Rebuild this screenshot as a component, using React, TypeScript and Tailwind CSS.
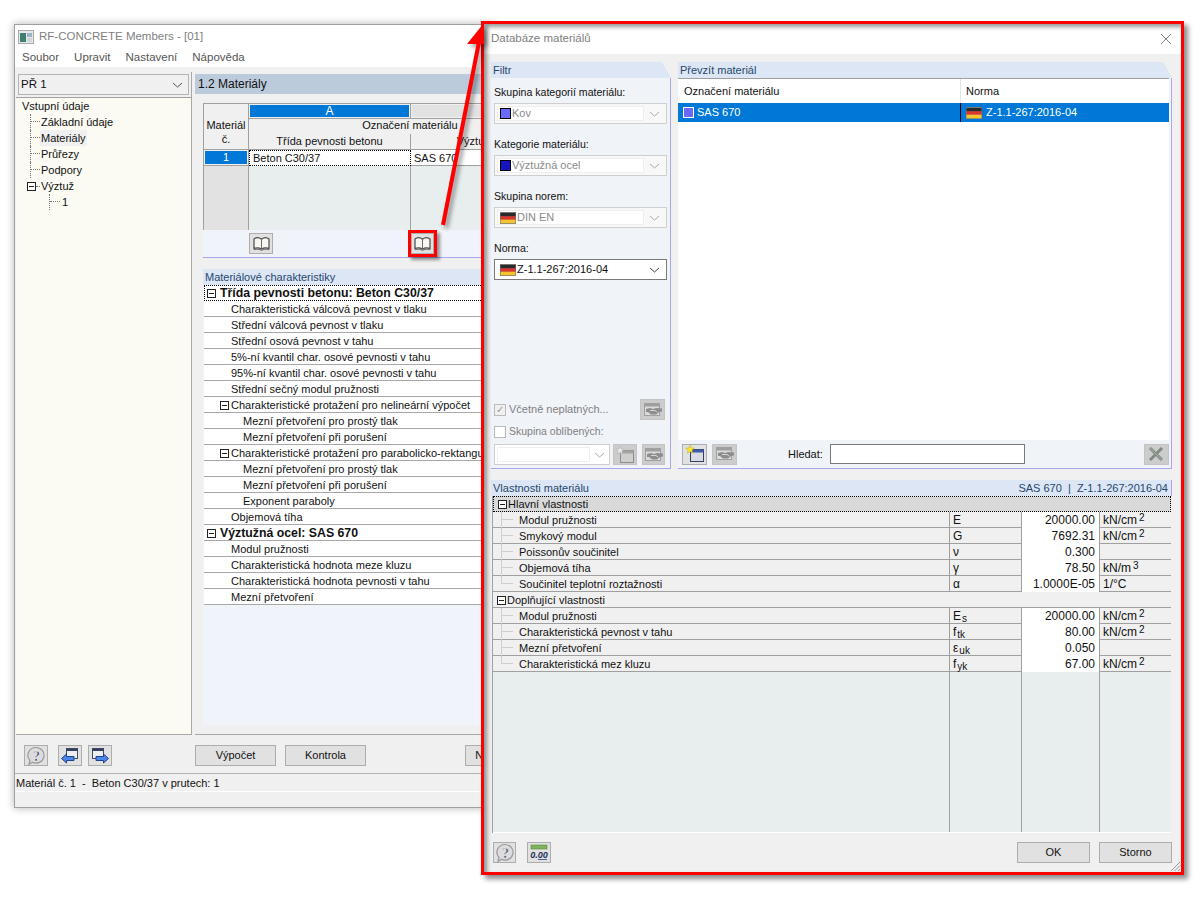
import type { ReactNode } from "react";

function Flag() {
  return (
    <svg width="16" height="12" viewBox="0 0 16 12" className="shrink-0">
      <rect width="16" height="12" fill="#777" />
      <rect x="0.5" y="1" width="15" height="3.4" fill="#2a2a2a" />
      <rect x="0.5" y="4.4" width="15" height="3.3" fill="#e0332c" />
      <rect x="0.5" y="7.7" width="15" height="3.6" fill="#f4c531" />
    </svg>
  );
}

function Chevron({ color = "#555" }: { color?: string }) {
  return (
    <svg width="11" height="6" viewBox="0 0 11 6" className="shrink-0">
      <path d="M1 1l4.5 4L10 1" fill="none" stroke={color} strokeWidth="1" />
    </svg>
  );
}

function BookIcon() {
  return (
    <svg width="17" height="15" viewBox="0 0 17 15">
      <path d="M1 3C3.500 1 6 1.200 8.500 3.200 11 1.200 13.500 1 16 3v9.500c-2.500-1-5-1-7.500.5C6 11.500 3.500 11.500 1 12.500z" fill="#f7f6f0" stroke="#4a4a4a" strokeWidth="1.200" />
      <path d="M8.500 3.200V13" stroke="#6d6d6d" strokeWidth="1" />
      <path d="M1 13.700c2.500-1 5-.8 7.500.6 2.500-1.400 5-1.600 7.500-.6" stroke="#777" strokeWidth="1.100" fill="none" />
    </svg>
  );
}

function HelpIcon() {
  return (
    <svg width="20" height="20" viewBox="0 0 20 20">
      <path d="M10 1.500a8 7.800 0 1 1-3.500 14.800L3 18.500l1-4A8 7.800 0 0 1 10 1.500z" fill="#dcdcdf" stroke="#9a9a9a" strokeWidth="1.200" />
      <text x="10.500" y="14.500" textAnchor="middle" fontSize="14" fontWeight="700" fontFamily="'Liberation Serif', serif" fill="#3a4560" stroke="#f4f4f4" strokeWidth=".4">?</text>
    </svg>
  );
}

function NavIcon({ dir }: { dir: "left" | "right" }) {
  return (
    <svg width="20" height="18" viewBox="0 0 20 18">
      <rect x={dir === "left" ? 6.5 : 2.5} y="1.500" width="11" height="10" fill="#eeeef2" stroke="#444c60" strokeWidth="1" />
      <rect x={dir === "left" ? 6.5 : 2.5} y="1.500" width="11" height="2.500" fill="#34405f" />
      {dir === "left" ? (
        <path d="M1.500 11.500l5-4.500v2.500h7.500v4H6.500V16z" fill="#4d86ea" stroke="#1f3f92" strokeWidth="1" />
      ) : (
        <path d="M18.500 11.500l-5-4.500v2.500H6v4h7.500V16z" fill="#4d86ea" stroke="#1f3f92" strokeWidth="1" />
      )}
    </svg>
  );
}

function ShakeIcon() {
  return (
    <svg width="20" height="16" viewBox="0 0 20 16">
      <rect x="1.500" y="1.500" width="15" height="12" fill="#dadada" stroke="#a0a0a0" />
      <rect x="2" y="2" width="14" height="2.500" fill="#9f9f9f" />
      <path d="M3 7l4-1 3 1 3-1 6 .5v3l-3 .5-3 2.500H8L5 10H3z" fill="#8d8d8d" />
      <path d="M7 8.500h5l2 1.500" stroke="#d5d5d5" fill="none" />
    </svg>
  );
}

function NewIcon({ active }: { active: boolean }) {
  const line = active ? "#334060" : "#8d8d8d";
  return (
    <svg width="20" height="18" viewBox="0 0 20 18">
      <rect x="5.500" y="4.500" width="13" height="12" fill={active ? "#d9dbe3" : "#cfcfcf"} stroke={line} />
      <rect x="5.500" y="4.500" width="13" height="3" fill={active ? "#3f5aa6" : "#a5a5a5"} />
      <path d="M5 0l1.200 3 3.100.2-2.400 2 .8 3L5 6.500 2.300 8.200l.8-3-2.400-2 3.100-.2z" fill={active ? "#f8ea2e" : "#e7e7e7"} stroke={active ? "#c4a810" : "#aaa"} strokeWidth=".5" />
    </svg>
  );
}

function CrossIcon() {
  return (
    <svg width="18" height="16" viewBox="0 0 18 16">
      <path d="M3 2l12 12M15 2L3 14" stroke="#7f8a82" strokeWidth="3" />
      <path d="M3 2l12 12" stroke="#a7afa9" strokeWidth="1" />
    </svg>
  );
}

function CalcIcon() {
  return (
    <svg width="20" height="20" viewBox="0 0 20 20">
      <rect x="2" y="2" width="16" height="4" fill="#7fb25c" stroke="#5a8a3e" strokeWidth=".6" />
      <text x="10" y="14.500" textAnchor="middle" fontSize="9" fontStyle="italic" fontWeight="700" fontFamily="'Liberation Sans', sans-serif" fill="#23325e">0.00</text>
      <path d="M9 16.500h9" stroke="#4a5f92" strokeWidth="1" />
    </svg>
  );
}

function IconBtn({ children, dim, cls }: { children: ReactNode; dim?: boolean; cls: string }) {
  return (
    <div className={`${cls} flex shrink-0 items-center justify-center border ${dim ? "border-[#c4c4c4] bg-[#cccccc]" : "border-[#adadad] bg-[#e1e1e1]"}`}>
      {children}
    </div>
  );
}

function Btn({ label, cls }: { label: string; cls: string }) {
  return (
    <div className={`${cls} flex h-[21px] shrink-0 items-center justify-center border border-[#adadad] bg-[#e1e1e1] text-[11px] text-[#111]`}>
      {label}
    </div>
  );
}

function Expander() {
  return (
    <span className="relative inline-block h-[9px] w-[9px] shrink-0 border border-[#222] bg-white">
      <span className="absolute left-[1px] top-[3px] h-[1px] w-[5px] bg-[#222]" />
    </span>
  );
}

function Combo({ label, swatch, flag, text, enabled }: { label: string; swatch?: string; flag?: boolean; text: string; enabled?: boolean }) {
  return (
    <>
      <div className="h-[18px] text-[10.6px] leading-[14px] text-[#111]">{label}</div>
      <div className={`mb-[13px] flex h-[21px] w-[173px] items-center border pl-[2px] pr-[6px] ${enabled ? "border-[#7a7a7a] bg-white text-[#111]" : "border-[#cfcfcf] bg-[#f8f8f8] text-[#8a8a8a]"}`}>
        <div className={`mr-[5px] flex h-[15px] flex-1 items-center gap-[1px] border pl-[2px] ${enabled ? "border-white" : "border-[#eeeeee] bg-white"}`}>
          {swatch && <span className={`h-[11px] w-[11px] shrink-0 border border-black ${swatch}`} />}
          {flag && <Flag />}
          <span className="truncate text-[11px]">{text}</span>
        </div>
        <Chevron color={enabled ? "#444" : "#aaa"} />
      </div>
    </>
  );
}

function PanelHead({ children }: { children: ReactNode }) {
  return (
    <div className="flex h-[16px] items-center bg-[#dce6f4] pl-[2px] text-[11px] text-[#27466e] [clip-path:polygon(0_0,calc(100%-9px)_0,100%_100%,0_100%)]">
      {children}
    </div>
  );
}

const navTree = [
  { t: "Základní údaje", selected: false },
  { t: "Materiály", selected: true },
  { t: "Průřezy", selected: false },
  { t: "Podpory", selected: false },
];

function NavTree() {
  return (
    <div className="flex-1 border-t border-[#a0a0a0] bg-[#fbfbf3] pl-[6px] text-[11px] leading-[16px] text-[#111]">
      <div className="h-[16px]">Vstupní údaje</div>
      {navTree.map((r) => (
        <div key={r.t} className="ml-[8px] flex h-[16px] items-stretch">
          <span className="w-[10px] shrink-0 border-l border-dotted border-[#777]">
            <span className="block h-[8px] border-b border-dotted border-[#777]" />
          </span>
          <span className={`px-[1px] ${r.selected ? "bg-[#f0f0f0]" : ""}`}>{r.t}</span>
        </div>
      ))}
      <div className="ml-[5px] flex h-[16px] items-center">
        <Expander />
        <span className="w-[4px] border-b border-dotted border-[#777]" />
        <span className="pl-[1px]">Výztuž</span>
      </div>
      <div className="ml-[27px] flex h-[16px] items-stretch">
        <span className="w-[11px] shrink-0 border-l border-dotted border-[#777]">
          <span className="block h-[8px] border-b border-dotted border-[#777]" />
        </span>
        <span className="pl-[2px]">1</span>
      </div>
    </div>
  );
}

const charRows: { t: string; kind: "group" | "sub" | "l1" | "l2" }[] = [
  { t: "Třída pevnosti betonu: Beton C30/37", kind: "group" },
  { t: "Charakteristická válcová pevnost v tlaku", kind: "l1" },
  { t: "Střední válcová pevnost v tlaku", kind: "l1" },
  { t: "Střední osová pevnost v tahu", kind: "l1" },
  { t: "5%-ní kvantil char. osové pevnosti v tahu", kind: "l1" },
  { t: "95%-ní kvantil char. osové pevnosti v tahu", kind: "l1" },
  { t: "Střední sečný modul pružnosti", kind: "l1" },
  { t: "Charakteristické protažení pro nelineární výpočet", kind: "sub" },
  { t: "Mezní přetvoření pro prostý tlak", kind: "l2" },
  { t: "Mezní přetvoření při porušení", kind: "l2" },
  { t: "Charakteristické protažení pro parabolicko-rektangulární", kind: "sub" },
  { t: "Mezní přetvoření pro prostý tlak", kind: "l2" },
  { t: "Mezní přetvoření při porušení", kind: "l2" },
  { t: "Exponent paraboly", kind: "l2" },
  { t: "Objemová tíha", kind: "l1" },
  { t: "Výztužná ocel: SAS 670", kind: "group" },
  { t: "Modul pružnosti", kind: "l1" },
  { t: "Charakteristická hodnota meze kluzu", kind: "l1" },
  { t: "Charakteristická hodnota pevnosti v tahu", kind: "l1" },
  { t: "Mezní přetvoření", kind: "l1" },
];

function CharRow({ t, kind, first }: { t: string; kind: string; first: boolean }) {
  return (
    <div className={`flex h-[16px] items-center whitespace-nowrap bg-white text-[11px] text-[#111] ${first ? "border border-dotted border-black" : "border-b border-[#a8a8a8] pt-[1px]"}`}>
      {kind === "group" && (
        <div className={`flex items-center font-bold ${first ? "pl-[2px]" : "pl-[3px]"}`}>
          <Expander />
          <span className="pl-[4px] text-[12.300px]">{t}</span>
        </div>
      )}
      {kind === "sub" && (
        <div className="flex items-center pl-[16px]">
          <Expander />
          <span className="pl-[2px]">{t}</span>
        </div>
      )}
      {kind === "l1" && <span className="pl-[27px]">{t}</span>}
      {kind === "l2" && <span className="pl-[39px]">{t}</span>}
    </div>
  );
}

function MainWindow() {
  return (
    <div className="absolute left-[14px] top-[24px] flex h-[784px] w-[480px] flex-col overflow-hidden border border-[#a0a0a0] bg-[#f0f0f0] shadow-[0_0_8px_rgba(0,0,0,0.3)]">
      <div className="flex h-[24px] items-center gap-[5px] bg-white pl-[3px] text-[11.500px] text-[#808080]">
        <svg width="16" height="14" viewBox="0 0 16 14">
          <rect x=".5" y=".5" width="15" height="13" fill="#e8e8e8" stroke="#aaa" />
          <rect x="2" y="3" width="6" height="9" fill="#3f7f6f" />
          <rect x="9" y="3" width="5" height="4" fill="#9db2c9" />
          <rect x="9" y="8" width="5" height="4" fill="#cfd6dc" />
        </svg>
        <span>RF-CONCRETE Members - [01]</span>
      </div>
      <div className="flex h-[18px] items-center gap-[15px] bg-white pl-[7px] text-[11.500px] text-[#555]">
        <span>Soubor</span>
        <span>Upravit</span>
        <span>Nastavení</span>
        <span>Nápověda</span>
      </div>

      <div className="mt-[5px] flex h-[663px]">
        <div className="ml-[1px] flex w-[176px] shrink-0 flex-col border-b border-r border-[#a8a8a8] pt-[2px]">
          <div className="mx-[2px] mb-[2px] flex h-[21px] items-center border border-[#b4b4b4] bg-[#f0f0f0] pl-[2px] pr-[5px] text-[11.500px] text-[#111]">
            <span className="flex-1">PŘ 1</span>
            <Chevron />
          </div>
          <NavTree />
        </div>

        <div className="ml-[3px] flex min-w-0 flex-1 flex-col border-b border-[#a8a8a8] pt-[2px]">
          <div className="flex h-[20px] items-center bg-[#bccbdb] pl-[3px] text-[12px] text-[#111]">1.2 Materiály</div>
          <div className="flex-1 pl-[8px] pt-[9px]">
            <div className="w-[500px] border-l border-t border-[#a0a0a0] bg-[#f0f0f0]">
              <div className="grid h-[126px] grid-cols-[45px_162px_160px] grid-rows-[15px_15px_16px_16px_1fr] text-[11px] text-[#111]">
                <div className="row-span-3 flex flex-col items-center justify-center border-b border-r border-[#a0a0a0] pt-[10px] leading-[14px]">
                  <span>Materiál</span>
                  <span>č.</span>
                </div>
                <div className="border-b border-r border-[#a0a0a0] p-[1px]">
                  <div className="flex h-[12px] items-center justify-center bg-[#0078d7] text-[12px] text-white">A</div>
                </div>
                <div className="border-b border-[#a0a0a0] p-[1px]">
                  <div className="h-[12px] bg-[#e2e2e2]" />
                </div>
                <div className="col-span-2 flex items-center justify-center pb-[3px]">Označení materiálu</div>
                <div className="flex items-center justify-center border-b border-r border-[#a0a0a0]">Třída pevnosti betonu</div>
                <div className="flex items-center justify-center border-b border-[#a0a0a0]">Výztužná ocel</div>
                <div className="flex items-center justify-center border-b border-r border-[#a0a0a0] p-[1px]">
                  <div className="flex h-[13px] w-full items-center justify-center bg-[#0078d7] text-white">1</div>
                </div>
                <div className="flex items-center border border-dotted border-black bg-white pl-[3px] pt-[1px]">Beton C30/37</div>
                <div className="flex items-center border-b border-[#a0a0a0] bg-white pl-[3px] pt-[1px]">SAS 670</div>
                <div className="border-r border-[#a0a0a0] bg-[#e2e2e2]" />
                <div className="border-r border-[#a0a0a0] bg-[#e8eeee]" />
                <div className="bg-[#e8eeee]" />
              </div>
            </div>
            <div className="flex h-[28px] w-[500px] items-center border-b border-[#a8a8e8] bg-[#f0f3fa] pl-[46px]">
              <IconBtn cls="h-[21px] w-[24px]"><BookIcon /></IconBtn>
              <div className="relative ml-[138px]">
                <IconBtn cls="h-[21px] w-[23px]"><BookIcon /></IconBtn>
                <div className="absolute -left-[3px] -top-[3px] h-[27px] w-[29px] border-[3px] border-[#ff0000] shadow-[3px_3px_3px_rgba(0,0,0,0.4)]" />
              </div>
            </div>

            <div className="mt-[11px] h-[456px] bg-[#f0f3fa]">
              <div className="flex h-[16px] items-center bg-[#dce6f4] pl-[2px] text-[11px] text-[#27466e]">Materiálové charakteristiky</div>
              <div className="ml-[1px]">
                {charRows.map((r, i) => (
                  <CharRow key={i} t={r.t} kind={r.kind} first={i === 0} />
                ))}
              </div>
            </div>
          </div>
        </div>
      </div>

      <div className="flex h-[39px] items-center border-b border-[#b4b4b4] pl-[9px] pt-[3px]">
        <IconBtn cls="h-[21px] w-[24px]"><HelpIcon /></IconBtn>
        <IconBtn cls="ml-[10px] h-[21px] w-[24px]"><NavIcon dir="left" /></IconBtn>
        <IconBtn cls="ml-[6px] h-[21px] w-[24px]"><NavIcon dir="right" /></IconBtn>
        <Btn label="Výpočet" cls="ml-[83px] w-[81px]" />
        <Btn label="Kontrola" cls="ml-[9px] w-[81px]" />
        <Btn label="Nastavení" cls="ml-[99px] w-[70px]" />
      </div>
      <div className="flex h-[18px] items-center whitespace-pre border-b border-white pl-[1px] pt-[2px] text-[11px] text-[#111]">Materiál č. 1  -  Beton C30/37 v prutech: 1</div>
    </div>
  );
}

function Sup({ n }: { n: string }) {
  return <sup className="-top-[3px] ml-[2px] text-[10px]">{n}</sup>;
}

function Sub({ t }: { t: string }) {
  return <sub className="-bottom-[2px] ml-[1px] text-[10px]">{t}</sub>;
}

const propRows: { name: string; sym?: ReactNode; val?: string; unit?: ReactNode; group?: boolean; focus?: boolean; last?: boolean }[] = [
  { name: "Hlavní vlastnosti", group: true, focus: true },
  { name: "Modul pružnosti", sym: "E", val: "20000.00", unit: <>kN/cm<Sup n="2" /></> },
  { name: "Smykový modul", sym: "G", val: "7692.31", unit: <>kN/cm<Sup n="2" /></> },
  { name: "Poissonův součinitel", sym: "ν", val: "0.300" },
  { name: "Objemová tíha", sym: "γ", val: "78.50", unit: <>kN/m<Sup n="3" /></> },
  { name: "Součinitel teplotní roztažnosti", sym: "α", val: "1.0000E-05", unit: "1/°C", last: true },
  { name: "Doplňující vlastnosti", group: true },
  { name: "Modul pružnosti", sym: <>E<Sub t="s" /></>, val: "20000.00", unit: <>kN/cm<Sup n="2" /></> },
  { name: "Charakteristická pevnost v tahu", sym: <>f<Sub t="tk" /></>, val: "80.00", unit: <>kN/cm<Sup n="2" /></> },
  { name: "Mezní přetvoření", sym: <>ε<Sub t="uk" /></>, val: "0.050" },
  { name: "Charakteristická mez kluzu", sym: <>f<Sub t="yk" /></>, val: "67.00", unit: <>kN/cm<Sup n="2" /></>, last: true },
];

function PropRow({ r }: { r: (typeof propRows)[number] }) {
  if (r.group) {
    return (
      <div className={`flex h-[16px] items-center gap-[1px] pl-[4px] text-[11px] text-[#111] ${r.focus ? "border border-dotted border-black bg-[#d9d9d9]" : "border-b border-[#a0a0a0] pt-[1px]"}`}>
        <Expander />
        <span>{r.name}</span>
      </div>
    );
  }
  return (
    <div className="grid h-[16px] grid-cols-[457px_72px_78px_1fr] border-b border-[#a0a0a0] text-[12px] leading-[16px] text-[#111]">
      <div className="flex items-stretch border-r border-[#a0a0a0] pl-[8px]">
        <span className={`w-[12px] shrink-0 border-l border-[#cfcfcf] ${r.last ? "h-[8px]" : ""}`}>
          <span className="block h-[8px] border-b border-[#cfcfcf]" />
        </span>
        <span className="pl-[6px] text-[11px]">{r.name}</span>
      </div>
      <div className="border-r border-[#a0a0a0] pl-[3px]">{r.sym}</div>
      <div className="border-r border-[#a0a0a0] bg-white pr-[4px] text-right">{r.val}</div>
      <div className="pl-[3px]">{r.unit}</div>
    </div>
  );
}

function Dialog() {
  return (
    <div className="absolute left-[481px] top-[21px] h-[854px] w-[703px] bg-[#f0f0f0]">
      <div className="flex h-full flex-col p-[3px]">
        <div className="flex h-[30px] items-center justify-between bg-white pl-[7px] pr-[9px] text-[11.500px] text-[#808080]">
          <span>Databáze materiálů</span>
          <svg width="12" height="12" viewBox="0 0 12 12">
            <path d="M1 1l10 10M11 1L1 11" stroke="#808080" strokeWidth="1" />
          </svg>
        </div>

        <div className="mt-[8px] flex h-[407px] gap-[7px] pl-[7px]">
          <div className="flex w-[180px] flex-col">
            <PanelHead>Filtr</PanelHead>
            <div className="flex flex-1 flex-col border-b border-r border-[#a8a8e8] bg-[#f0f3f8] pl-[3px] pt-[7px]">
              <Combo label="Skupina kategorií materiálu:" swatch="bg-[#6a6aff]" text="Kov" />
              <Combo label="Kategorie materiálu:" swatch="bg-[#1414c0]" text="Výztužná ocel" />
              <Combo label="Skupina norem:" flag text="DIN EN" />
              <Combo label="Norma:" flag text="Z-1.1-267:2016-04" enabled />
              <div className="flex-1" />
              <div className="flex h-[21px] items-center text-[11px] text-[#808080]">
                <span className="flex h-[12px] w-[12px] items-center justify-center border border-[#bbb] bg-[#f0f0f0] text-[10px] leading-none text-[#999]">✓</span>
                <span className="ml-[3px] w-[131px]">Včetně neplatných...</span>
                <IconBtn dim cls="h-[21px] w-[25px]"><ShakeIcon /></IconBtn>
              </div>
              <div className="mt-[1px] flex h-[21px] items-center text-[10.500px] text-[#808080]">
                <span className="h-[12px] w-[12px] border border-[#bbb] bg-white" />
                <span className="ml-[3px]">Skupina oblíbených:</span>
              </div>
              <div className="mb-[3px] mt-[2px] flex h-[21px] items-center">
                <div className="flex h-[21px] w-[116px] items-center border border-[#cfcfcf] bg-white pl-[2px] pr-[4px]">
                  <span className="mr-[4px] h-[15px] flex-1 border border-[#eee]" />
                  <Chevron color="#aaa" />
                </div>
                <IconBtn dim cls="ml-[3px] h-[21px] w-[24px]"><NewIcon active={false} /></IconBtn>
                <IconBtn dim cls="ml-[5px] h-[21px] w-[23px]"><ShakeIcon /></IconBtn>
              </div>
            </div>
          </div>

          <div className="flex w-[494px] flex-col">
            <PanelHead>Převzít materiál</PanelHead>
            <div className="flex flex-1 flex-col border-b border-r border-[#a8a8e8] bg-[#f0f3f8]">
              <div className="mr-[2px] flex-1 border-t border-[#a0a0a0] bg-white text-[11px] text-[#111]">
                <div className="flex h-[24px] items-center">
                  <div className="flex h-full w-[283px] items-center border-r border-[#e4e4e4] pl-[6px]">Označení materiálu</div>
                  <div className="pl-[5px]">Norma</div>
                </div>
                <div className="flex h-[19px] items-center bg-[#0078d7] text-white">
                  <div className="flex h-full w-[283px] items-center gap-[3px] border-r border-black pl-[5px]">
                    <span className="h-[11px] w-[11px] border border-white bg-[#6a6aff]" />
                    <span>SAS 670</span>
                  </div>
                  <div className="flex items-center gap-[4px] pl-[5px]">
                    <Flag />
                    <span>Z-1.1-267:2016-04</span>
                  </div>
                </div>
              </div>
              <div className="flex h-[28px] items-center pl-[4px]">
                <IconBtn cls="h-[21px] w-[25px]"><NewIcon active /></IconBtn>
                <IconBtn dim cls="ml-[5px] h-[21px] w-[25px]"><ShakeIcon /></IconBtn>
                <span className="ml-[51px] text-[11px] text-[#111]">Hledat:</span>
                <div className="ml-[7px] h-[20px] w-[195px] border border-[#7a7a7a] bg-white" />
                <IconBtn dim cls="ml-[119px] h-[21px] w-[25px]"><CrossIcon /></IconBtn>
              </div>
            </div>
          </div>
        </div>

        <div className="ml-[7px] mt-[11px] flex h-[353px] w-[681px] flex-col">
          <div className="flex h-[16px] items-center justify-between whitespace-pre border-r border-[#a8a8e8] bg-[#dce6f4] pl-[2px] pr-[3px] text-[11px] text-[#27466e]">
            <span>Vlastnosti materiálu</span>
            <span>SAS 670  |  Z-1.1-267:2016-04</span>
          </div>
          <div className="ml-[1px] mr-[1px] flex flex-1 flex-col border-l border-[#a0a0a0]">
            {propRows.map((r, i) => (
              <PropRow key={i} r={r} />
            ))}
            <div className="grid flex-1 grid-cols-[457px_72px_78px_1fr] bg-[#e8eeee]">
              <div className="border-r border-[#a0a0a0]" />
              <div className="border-r border-[#a0a0a0]" />
              <div className="border-r border-[#a0a0a0]" />
              <div />
            </div>
            <div className="h-[1px] bg-white" />
          </div>
        </div>

        <div className="flex flex-1 items-start pl-[9px] pt-[9px]">
          <IconBtn cls="h-[21px] w-[23px]"><HelpIcon /></IconBtn>
          <IconBtn cls="ml-[11px] h-[21px] w-[24px]"><CalcIcon /></IconBtn>
          <Btn label="OK" cls="ml-[466px] w-[73px]" />
          <Btn label="Storno" cls="ml-[9px] w-[73px]" />
        </div>
      </div>

      <svg width="11" height="11" viewBox="0 0 11 11" className="absolute bottom-[3px] right-[3px]">
        <path d="M10 1L1 10M10 4.500L4.500 10M10 8L8 10" stroke="#9a9a9a" strokeWidth="1" />
      </svg>
      <div className="pointer-events-none absolute inset-0 border-[3px] border-[#ff0000] shadow-[4px_4px_5px_rgba(0,0,0,0.45),inset_3px_3px_4px_rgba(0,0,0,0.4)]" />
    </div>
  );
}

export default function App() {
  return (
    <div className="relative h-[900px] w-[1200px] overflow-hidden bg-white font-['Liberation_Sans',sans-serif]">
      <MainWindow />
      <Dialog />
      <svg width="60" height="230" viewBox="440 20 60 230" className="absolute left-[440px] top-[20px] drop-shadow-[3px_3px_2px_rgba(0,0,0,0.4)]">
        <path d="M443 225L479 42" stroke="#ff0000" strokeWidth="4" fill="none" />
        <path d="M467 44L484 23V44z" fill="#ff0000" />
      </svg>
    </div>
  );
}
